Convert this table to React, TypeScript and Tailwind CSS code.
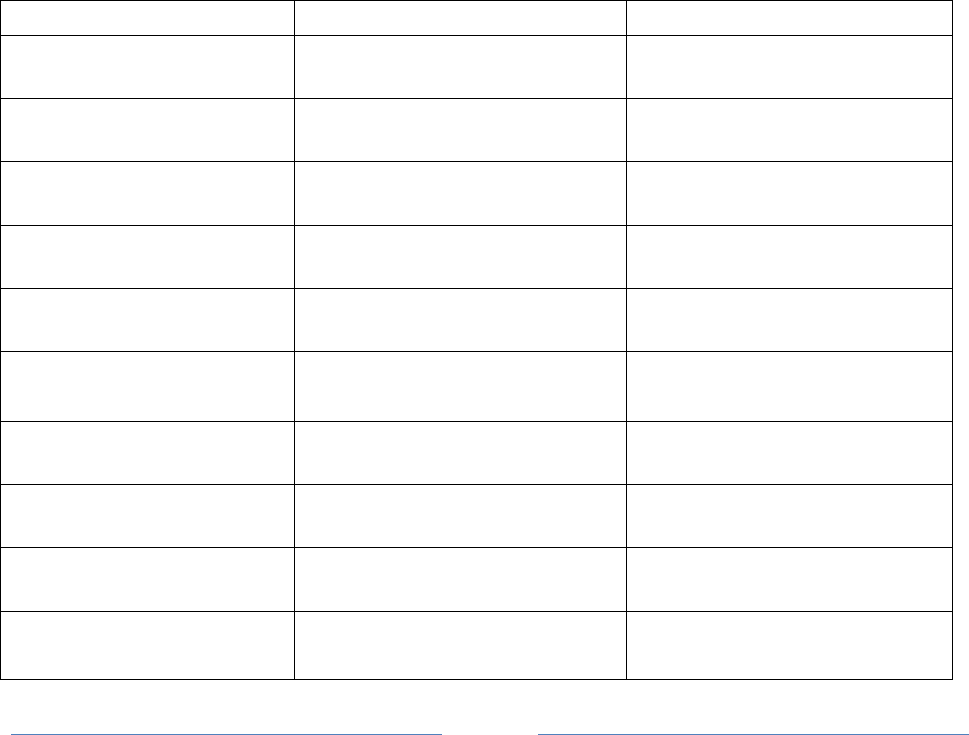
const rowHeights = [35, 63, 63, 64, 63, 63, 70, 63, 63, 64, 68];

export default function App() {
  return (
    <div className="w-[969px] h-[735px] bg-white overflow-hidden font-['Liberation_Sans',sans-serif]">
      {/* Table grid */}
      <div className="w-[953px] border-l border-t border-black">
        {rowHeights.map((h, i) => (
          <div key={i} className="flex border-b border-black box-border" style={{ height: h }}>
            <div className="w-[294px] border-r border-black" />
            <div className="w-[332px] border-r border-black" />
            <div className="w-[326px] border-r border-black" />
          </div>
        ))}
      </div>

      {/* Underlines */}
      <div className="flex pl-[11px] gap-[96px]">
        <div className="w-[431px] h-[55px] border-b border-[#4f81bd]" />
        <div className="w-[431px] h-[55px] border-b border-[#4f81bd]" />
      </div>
    </div>
  );
}
